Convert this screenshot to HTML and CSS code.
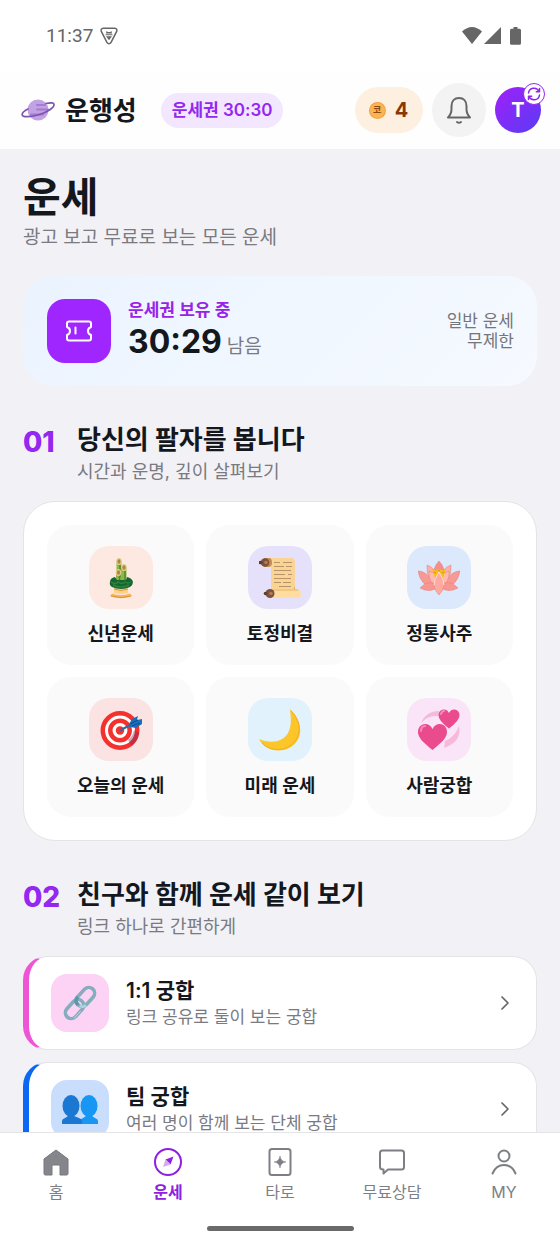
FILE: index.html
```
<!DOCTYPE html>
<html lang="ko">
<head>
    <meta charset="UTF-8">
    <meta name="viewport" content="width=device-width, initial-scale=1.0">
    <title>운행성 - 운세</title>
    <link rel="stylesheet" href="styles.css">
</head>
<body>
    <div class="status-bar">
        <div class="status-left">
            <span>11:37</span>
            <svg width="18" height="18" viewBox="0 0 18 18">
                <path d="M3.2 1.2h11.6q2.6.5 2 3l-5.6 11q-2.2 3-4.4 0L1.200 4.200q-.6-2.500 2-3z" fill="none" stroke="#666" stroke-width="1.500"/>
                <path d="M6 6.500l.5-2.500 1.300 1h2.400l1.300-1 .5 2.500z M5.500 7.300h7v1h-7z M6 9.200h6L9 13.200z" fill="#666"/>
            </svg>
        </div>
        <div class="status-right">
            <svg width="20" height="17" viewBox="0 0 20 17"><path d="M0 4.500Q10-4.500 20 4.500L10 17z" fill="#666"/></svg>
            <svg width="17" height="17" viewBox="0 0 17 17"><path d="M17 0v17H0z" fill="#666"/></svg>
            <svg class="battery" width="11" height="18" viewBox="0 0 11 18"><path d="M3.500 0h4v1.800H9.500q1.500 0 1.500 1.500v13q0 1.500-1.500 1.500h-8Q0 17.800 0 16.300v-13q0-1.500 1.500-1.500h2z" fill="#666"/></svg>
        </div>
    </div>

    <header class="app-header">
        <a class="brand" href="#">
            <svg width="34" height="28" viewBox="0 0 34 28">
                <circle cx="17" cy="14" r="10.500" fill="#c3a2e3"/>
                <path d="M16 9h8M16 13.500h11M10 18.500h12" stroke="#a37dd0" stroke-width="2" stroke-linecap="round"/>
                <path d="M25 7.500c5-1.200 8-.8 8 1 .2 3-6.500 7.500-14.500 10S1.800 21.500 1.200 19c-.4-1.800 1.800-4 5.800-6" fill="none" stroke="#7d55b0" stroke-width="1.700" stroke-linecap="round"/>
            </svg>
            <span>운행성</span>
        </a>
        <a class="ticket-pill" href="#">운세권 30:30</a>
        <div class="header-actions">
            <button class="coin-button" type="button" aria-label="코인 4개">
                <span class="coin">코</span>
                <span>4</span>
            </button>
            <button class="bell-button" type="button" aria-label="알림">
                <svg width="26" height="30" viewBox="0 0 26 30" fill="none" stroke="#666" stroke-width="2" stroke-linecap="round" stroke-linejoin="round">
                    <path d="M2 22.500h22c-2-2-3.500-5-3.500-8.500V11c0-5-3-8-7.500-8s-7.500 3-7.500 8v3c0 3.500-1.500 6.500-3.500 8.500z"/>
                    <path d="M11 27q2 1.600 4 0"/>
                </svg>
            </button>
            <button class="avatar" type="button" aria-label="내 프로필">
                T
                <span class="avatar-badge">
                    <svg width="14" height="14" viewBox="0 0 14 14" fill="none" stroke="#8f24ee" stroke-width="1.500" stroke-linecap="round" stroke-linejoin="round">
                        <path d="M1.500 6A5.500 5.500 0 0 1 12 4.500M12.500 1.500v3.200H9.300M12.500 8A5.500 5.500 0 0 1 2 9.500M1.500 12.500V9.300h3.200"/>
                    </svg>
                </span>
            </button>
        </div>
    </header>

    <main class="content">
        <h1>운세</h1>
        <p class="subtitle">광고 보고 무료로 보는 모든 운세</p>

        <section class="pass-card">
            <div class="pass-icon">
                <svg width="28" height="24" viewBox="0 0 28 24" fill="none" stroke="#fff" stroke-width="2" stroke-linejoin="round" stroke-linecap="round">
                    <path d="M4 2.500h20q2 0 2 2V8q-3 1-3 4t3 4v3.500q0 2-2 2H4q-2 0-2-2V16q3-1 3-4T2 8V4.500q0-2 2-2z"/>
                    <path d="M10.500 8.500v6"/>
                </svg>
            </div>
            <div class="pass-info">
                <p class="pass-label">운세권 보유 중</p>
                <p class="pass-time"><strong>30:29</strong> <span>남음</span></p>
            </div>
            <p class="pass-note">일반 운세<br>무제한</p>
        </section>

        <section>
            <div class="section-head">
                <span class="section-number">01</span>
                <div>
                    <h2>당신의 팔자를 봅니다</h2>
                    <p>시간과 운명, 깊이 살펴보기</p>
                </div>
            </div>
            <div class="fortune-grid">
                <a class="tile" href="#">
                    <span class="tile-icon peach">
                        <svg width="42" height="42" viewBox="0 0 42 42">
                            <path d="M12 36.500q9 3 18 0l2 2.500q-11 4.500-22 0z" fill="#f5b85b"/>
                            <path d="M14 30h14v6q-7 2-14 0z" fill="#ffd28a"/>
                            <path d="M14 32q7 3 14 0M11 39q10 3 20 0" fill="none" stroke="#df9138"/>
                            <path d="M16.500 5h5v20h-5zM21.500 11h5v14h-5zM16 16h5v10h-5z" fill="#8eb747"/>
                            <path d="M20 8v12M25 14v11M19.500 18v8" stroke="#4c8b35" stroke-width="1.500"/>
                            <path d="M10 25q0-4 5-5l2 3h9l1-3q5 1 6 5 0 3-3 5-9 4-18 0-3-2-2-5z" fill="#17652e"/>
                            <path d="M11 25q4 3 7 0 4 3 7 0 3 2 6 0M13 28q8 4 16 0" fill="none" stroke="#2b8540" stroke-width="1.500"/>
                            <ellipse cx="19" cy="4.500" rx="2.800" ry="3.500" fill="#e2cd83"/>
                            <ellipse cx="24" cy="10.500" rx="2.800" ry="3.500" fill="#e2cd83"/>
                            <ellipse cx="18.500" cy="15.500" rx="2.800" ry="3.500" fill="#e2cd83"/>
                            <ellipse cx="19" cy="4.500" rx="1.600" ry="2.300" fill="#ad8450"/>
                            <ellipse cx="24" cy="10.500" rx="1.600" ry="2.300" fill="#ad8450"/>
                            <ellipse cx="18.500" cy="15.500" rx="1.600" ry="2.300" fill="#ad8450"/>
                        </svg>
                    </span>
                    <span class="tile-label">신년운세</span>
                </a>
                <a class="tile" href="#">
                    <span class="tile-icon lavender">
                        <svg width="42" height="42" viewBox="0 0 42 42">
                            <path d="M5 1h27q4 0 4 5v29H12V10H5z" fill="#f9d493"/>
                            <path d="M30 35q5-1 6-6v6z" fill="#d5a25c"/>
                            <path d="M5 1h5q3 0 3 4.500T9 10H5z" fill="#c48c50"/>
                            <path d="M12 32h27q3 0 3 4.500t-3 4.500H10z" fill="#ffdca0"/>
                            <path d="M12 33h27" stroke="#e4b26c"/>
                            <circle cx="6" cy="5.500" r="4.300" fill="#7c5039"/>
                            <circle cx="11" cy="36.500" r="4.500" fill="#7c5039"/>
                            <circle cx="1.500" cy="5.500" r="1.800" fill="#5c3c2f"/>
                            <circle cx="6.500" cy="36.500" r="1.800" fill="#5c3c2f"/>
                            <circle cx="7" cy="5.500" r="1.800" fill="#b37a53"/>
                            <circle cx="12" cy="36.500" r="1.800" fill="#b37a53"/>
                            <path d="M15 5.500h6M24 5.500h9M15 9.500h10M27 9.500h6M15 13.500h17M15 17.500h11M29 17.500h4M15 21.500h17M15 25.500h7M24 25.500h8M20 29.500h12" stroke="#b8926a"/>
                        </svg>
                    </span>
                    <span class="tile-label">토정비결</span>
                </a>
                <a class="tile" href="#">
                    <span class="tile-icon blue">
                        <svg width="42" height="42" viewBox="0 0 42 42">
                            <g stroke="#e07d7c" stroke-width=".5">
                                <path d="M0 14q8 0 13 9l4 8Q3 30 0 14z" fill="#f79a95"/>
                                <path d="M42 14q-8 0-13 9l-4 8q14-1 17-17z" fill="#f79a95"/>
                                <path d="M9 8q10 3 12 18Q8 26 9 8z" fill="#fbb0a6"/>
                                <path d="M33 8Q23 11 21 26q13 0 12-18z" fill="#fbb0a6"/>
                                <path d="M21 4q7 7 5 18H16Q14 11 21 4z" fill="#f58f8c"/>
                                <path d="M11 14q9 2 10 16-11-3-10-16z" fill="#ffb9ad"/>
                                <path d="M31 14q-9 2-10 16 11-3 10-16z" fill="#ffb9ad"/>
                                <path d="M14 12.500l3 1 4-1.500 4 1.500 3-1-3 8H17z" fill="#f7bd18" stroke="none"/>
                                <path d="M2 31q9-10 19-2-8 8-19 2z" fill="#f9968f"/>
                                <path d="M40 31q-9-10-19-2 8 8 19 2z" fill="#f9968f"/>
                                <path d="M21 15q6 9 5 14-1 5-5 9-4-4-5-9-1-5 5-14z" fill="#ffaaa1"/>
                            </g>
                            <path d="M16.500 15.500h1M20.500 13.500h1M24.500 15.500h1" stroke="#c48018" stroke-width="1.500"/>
                            <path d="M21 15q-5 7-5 13M21 15q5 7 5 13" fill="none" stroke="#ffe2d5"/>
                        </svg>
                    </span>
                    <span class="tile-label">정통사주</span>
                </a>
                <a class="tile" href="#">
                    <span class="tile-icon red">
                        <svg width="42" height="42" viewBox="0 0 42 42">
                            <circle cx="20" cy="21.500" r="17.200" fill="#fff" stroke="#f4312d" stroke-width="4.500"/>
                            <circle cx="20" cy="21.500" r="9.700" fill="#fff" stroke="#f4312d" stroke-width="4.500"/>
                            <circle cx="20" cy="21.500" r="4.200" fill="#f4312d"/>
                            <path d="M28 31q5-4 6-10l5 3q-1 8-7 13z" fill="#7d2c61" opacity=".4"/>
                            <path d="M20 21.500l11-6" stroke="#39699a" stroke-width="2"/>
                            <path d="M29 15l3-5 6-3-1 4 5-1v5l-6 4-6-1z" fill="#1b6eb8"/>
                            <path d="M30 15l8-4M32 17l8-3" stroke="#0b4c94"/>
                        </svg>
                    </span>
                    <span class="tile-label">오늘의 운세</span>
                </a>
                <a class="tile" href="#">
                    <span class="tile-icon sky">
                        <svg width="42" height="42" viewBox="0 0 42 42">
                            <path d="M31 0C45 13 44 30 32 38 20 45 5 41 0 30c12 5 24 3 29-6 4-8 3-15 2-24z" fill="#fcc62a"/>
                            <path d="M32 2c11 11 11 26-1 35-10 6-21 4-28-3" fill="none" stroke="#efaf21"/>
                        </svg>
                    </span>
                    <span class="tile-label">미래 운세</span>
                </a>
                <a class="tile" href="#">
                    <span class="tile-icon pink">
                        <svg width="42" height="42" viewBox="0 0 42 42">
                            <path d="M3 14Q8 2 21 2l-1 5Q10 6 3 14z" fill="#f6b9d9"/>
                            <path d="M41 17q3 16-15 22l1-7q10-4 14-15z" fill="#f6b9d9"/>
                            <path d="M31 19.500C24 14 20.500 10 20.500 6c0-6 8-8 10.500-2 2.500-6 10.500-4 10.500 2 0 4-3.500 8-10.500 13.500z" fill="#e94b8c"/>
                            <path d="M14.500 41C6 34 0 29 0 23c0-9 11-11 14.500-3C18 12 29 14 29 23c0 6-6 11-14.500 18z" fill="#e94b8c"/>
                            <path d="M3 22q0-5 4-5M23 5q1-3 3-3" fill="none" stroke="#f98abd" stroke-width="2" stroke-linecap="round"/>
                        </svg>
                    </span>
                    <span class="tile-label">사람궁합</span>
                </a>
            </div>
        </section>

        <section>
            <div class="section-head">
                <span class="section-number">02</span>
                <div>
                    <h2>친구와 함께 운세 같이 보기</h2>
                    <p>링크 하나로 간편하게</p>
                </div>
            </div>
            <div class="match-list">
                <a class="match-card match-pair" href="#">
                    <span class="match-icon">
                        <svg width="36" height="36" viewBox="-2 -2 40 40" fill="none">
                            <g transform="rotate(-48 18 18)">
                                <rect x="15" y="11.500" width="24" height="13" rx="6.500" stroke="#86adbd" stroke-width="4"/>
                                <rect x="-3" y="11.500" width="24" height="13" rx="6.500" stroke="#86adbd" stroke-width="4"/>
                                <path d="M15 18q0-6.500 6.500-6.500" stroke="#5c98a8" stroke-width="4"/>
                                <path d="M15.500 20q1 4 5 4.500" stroke="#a8d6df" stroke-width="3"/>
                                <path d="M1 24.500h11" stroke="#b3dce5"/>
                            </g>
                        </svg>
                    </span>
                    <span class="match-text">
                        <strong>1:1 궁합</strong>
                        <span>링크 공유로 둘이 보는 궁합</span>
                    </span>
                    <svg class="chevron" width="10" height="16" viewBox="0 0 10 16"><path d="M2 2l6 6-6 6" fill="none" stroke="#666" stroke-width="1.700" stroke-linecap="round" stroke-linejoin="round"/></svg>
                </a>
                <a class="match-card match-team" href="#">
                    <span class="match-icon">
                        <svg width="36" height="36" viewBox="0 0 36 36">
                            <path d="M18 33v-3q0-2 3-3l3-2v-2h6v2l3 2q3 1 3 3v3z" fill="#1797f3"/>
                            <ellipse cx="27" cy="15" rx="8.500" ry="11" fill="#1797f3"/>
                            <path d="M0 33v-3q0-2 3-3l3-2v-2h6v2l5 2q3 1 3 3v3z" fill="#1b78d2"/>
                            <ellipse cx="9" cy="15" rx="8.500" ry="11" fill="#1b78d2"/>
                        </svg>
                    </span>
                    <span class="match-text">
                        <strong>팀 궁합</strong>
                        <span>여러 명이 함께 보는 단체 궁합</span>
                    </span>
                    <svg class="chevron" width="10" height="16" viewBox="0 0 10 16"><path d="M2 2l6 6-6 6" fill="none" stroke="#666" stroke-width="1.700" stroke-linecap="round" stroke-linejoin="round"/></svg>
                </a>
            </div>
        </section>
    </main>

    <footer class="bottom-bar">
        <nav class="tabs">
            <a class="tab" href="#">
                <svg width="30" height="30" viewBox="0 0 30 30"><path d="M15 3L3 12v14.500q0 1.500 1.500 1.500H11v-9q0-1 1-1h6q1 0 1 1v9h6.500q1.500 0 1.500-1.500V12z" fill="#85868c" stroke="#77787f" stroke-linejoin="round"/></svg>
                홈
            </a>
            <a class="tab active" href="#">
                <svg width="30" height="30" viewBox="0 0 30 30">
                    <circle cx="15" cy="15" r="13" fill="none" stroke="#8f20e0" stroke-width="2"/>
                    <path d="M20.500 9.500L17.500 17.500 12.500 12.500z" fill="#8f20e0"/>
                    <path d="M10 20l2.500-7.500 5 5z" fill="#d7a9f4"/>
                </svg>
                운세
            </a>
            <a class="tab" href="#">
                <svg width="30" height="30" viewBox="0 0 30 30">
                    <rect x="4.500" y="2" width="21" height="26" rx="2.500" fill="none" stroke="#7e7f86" stroke-width="2"/>
                    <path d="M15 9q.6 5.400 6 6-5.400.6-6 6-.6-5.400-6-6 5.400-.6 6-6z" fill="#7e7f86" stroke="#7e7f86" stroke-width=".5"/>
                </svg>
                타로
            </a>
            <a class="tab" href="#">
                <svg width="30" height="30" viewBox="0 0 30 30"><path d="M5.500 3.500h19q2.500 0 2.500 2.500v14q0 2.500-2.500 2.500H11L6.500 26.500V22.500Q3 22.500 3 20V6q0-2.500 2.500-2.500z" fill="none" stroke="#7e7f86" stroke-width="2" stroke-linejoin="round"/></svg>
                무료상담
            </a>
            <a class="tab" href="#">
                <svg width="30" height="30" viewBox="0 0 30 30" fill="none" stroke="#7e7f86" stroke-width="2" stroke-linecap="round">
                    <circle cx="15" cy="9" r="5.500"/>
                    <path d="M3.500 26.500C6 20.500 10 18 15 18s9 2.500 11.500 8.500"/>
                </svg>
                MY
            </a>
        </nav>
        <div class="home-indicator"></div>
    </footer>
</body>
</html>
```
FILE: styles.css
```
* {
    box-sizing: border-box;
}
body {
    display: flex;
    flex-direction: column;
    height: 100vh;
    margin: 0;
    font-family: Inter, "Noto Sans CJK KR", sans-serif;
    background-color: #f2f1f6;
    color: #14171c;
}
h1, h2, p {
    margin: 0;
}
a {
    color: inherit;
    text-decoration: none;
}
button {
    padding: 0;
    border: none;
    font-family: inherit;
    cursor: pointer;
}
svg {
    display: block;
    flex: none;
}

/* Status bar */
.status-bar {
    display: flex;
    justify-content: space-between;
    align-items: center;
    flex: none;
    height: 71px;
    padding: 0 39px 0 46px;
    background-color: #fff;
    color: #666;
    font-family: Roboto, sans-serif;
    font-size: 19px;
}
.status-left {
    display: flex;
    align-items: center;
    gap: 7px;
}
.status-right {
    display: flex;
    align-items: center;
    gap: 2px;
}
.battery {
    margin-left: 7px;
}

/* Header */
.app-header {
    display: flex;
    align-items: center;
    flex: none;
    height: 79px;
    padding: 0 19px 0 21px;
    background-color: #fefefe;
    border-bottom: 1px solid #f0f0f4;
}
.brand {
    display: flex;
    align-items: center;
    gap: 10px;
    font-size: 26px;
    font-weight: 700;
}
.brand span {
    padding-bottom: 4px;
}
.ticket-pill {
    margin-left: 24px;
    padding: 0 11px;
    border-radius: 18px;
    background-color: #f2e7ff;
    color: #9427f0;
    font-size: 17px;
    font-weight: 600;
    line-height: 35px;
}
.header-actions {
    display: flex;
    align-items: center;
    gap: 9px;
    margin-left: auto;
}
.coin-button {
    display: flex;
    align-items: center;
    justify-content: center;
    gap: 10px;
    width: 68px;
    height: 46px;
    border-radius: 23px;
    background-color: #fdf0e0;
    color: #8a3606;
    font-size: 20px;
    font-weight: 700;
}
.coin {
    width: 15px;
    height: 15px;
    border-radius: 50%;
    background-color: #fbb44f;
    box-shadow: 0 0 0 1px #f0a048;
    color: #8a4a12;
    font-size: 9px;
    line-height: 14px;
}
.bell-button {
    display: grid;
    place-items: center;
    width: 54px;
    height: 54px;
    border-radius: 50%;
    background-color: #f3f3f4;
}
.avatar {
    position: relative;
    width: 46px;
    height: 46px;
    border-radius: 50%;
    background: linear-gradient(135deg, #a020f8, #5a3cf5);
    color: #fff;
    font-size: 20px;
    font-weight: 700;
}
.avatar-badge {
    position: absolute;
    top: -4px;
    right: -4px;
    display: grid;
    place-items: center;
    width: 22px;
    height: 22px;
    border: 1px solid #9427f0;
    border-radius: 50%;
    background-color: #fff;
}

/* Content */
.content {
    flex: 1;
    min-height: 0;
    overflow-y: auto;
    scrollbar-width: none;
    padding: 21px 23px;
}
h1 {
    font-size: 41px;
    font-weight: 700;
    line-height: 52px;
}
.subtitle {
    color: #7a7a80;
    font-size: 19px;
    line-height: 30px;
}
.pass-card {
    display: flex;
    align-items: center;
    gap: 17px;
    margin-top: 23px;
    padding: 23px 23px 23px 24px;
    border-radius: 30px;
    background: linear-gradient(135deg, #ebf3ff, #f0f7ff 50%, #f6f9ff);
}
.pass-icon {
    display: grid;
    place-items: center;
    width: 64px;
    height: 64px;
    border-radius: 18px;
    background-color: #a026ff;
}
.pass-label {
    color: #9a22e8;
    font-size: 17px;
    font-weight: 600;
    line-height: 22px;
}
.pass-time {
    display: flex;
    align-items: baseline;
    gap: 5px;
    color: #7a7a80;
    font-size: 19px;
    line-height: 20px;
}
.pass-time strong {
    color: #14171c;
    font-size: 32px;
    line-height: 42px;
}
.pass-note {
    margin-left: auto;
    color: #74757b;
    font-size: 17px;
    line-height: 20px;
    text-align: right;
}
.section-head {
    display: flex;
    margin: 36px 0 16px;
}
.section-number {
    width: 54px;
    color: #9427f0;
    font-size: 28px;
    font-weight: 800;
    line-height: 40px;
}
h2 {
    font-size: 26px;
    font-weight: 700;
    line-height: 36px;
}
.section-head p {
    color: #7a7a80;
    font-size: 18px;
    line-height: 27px;
}

/* Fortune tiles */
.fortune-grid {
    display: grid;
    grid-template-columns: repeat(3, 1fr);
    gap: 12px;
    padding: 23px;
    border: 1px solid #e4e4e8;
    border-radius: 32px;
    background-color: #fff;
}
.tile {
    display: flex;
    flex-direction: column;
    align-items: center;
    gap: 11px;
    padding: 21px 0 18px;
    border-radius: 24px;
    background-color: #fafafa;
}
.tile-icon {
    display: grid;
    place-items: center;
    width: 64px;
    height: 63px;
    border-radius: 20px;
}
.tile-label {
    font-size: 18px;
    font-weight: 600;
    line-height: 27px;
}
.peach {
    background-color: #fde9e1;
}
.lavender {
    background-color: #e5e1fb;
}
.blue {
    background-color: #dce8fb;
}
.red {
    background-color: #fbe2e3;
}
.sky {
    background-color: #e1f2fc;
}
.pink {
    background-color: #f9e5f7;
}

/* Match cards */
.match-list {
    display: flex;
    flex-direction: column;
    gap: 12px;
}
.match-card {
    display: flex;
    align-items: center;
    gap: 17px;
    height: 94px;
    padding: 0 26px 0 22px;
    border: 1px solid #e4e4e8;
    border-left-width: 6px;
    border-radius: 24px;
    background-color: #fff;
}
.match-pair {
    border-left-color: #f054d6;
}
.match-team {
    border-left-color: #0a68f5;
}
.match-icon {
    display: grid;
    place-items: center;
    width: 58px;
    height: 58px;
    border-radius: 16px;
}
.match-pair .match-icon {
    background-color: #fcd3f5;
}
.match-team .match-icon {
    background-color: #c9defd;
}
.match-text {
    display: flex;
    flex-direction: column;
    color: #7a7a80;
    font-size: 17px;
    line-height: 26px;
}
.match-text strong {
    color: #14171c;
    font-size: 21px;
    font-weight: 600;
    line-height: 27px;
}
.chevron {
    margin-left: auto;
}

/* Bottom tabs */
.bottom-bar {
    flex: none;
    padding-bottom: 13px;
    border-top: 1px solid #e4e4e8;
    background-color: #fff;
}
.tabs {
    display: grid;
    grid-template-columns: repeat(5, 1fr);
    padding: 14px 0 22px;
}
.tab {
    display: flex;
    flex-direction: column;
    align-items: center;
    gap: 3px;
    color: #7e7f86;
    font-size: 16px;
    line-height: 24px;
}
.tab.active {
    color: #8f20e0;
    font-weight: 600;
}
.home-indicator {
    width: 147px;
    height: 5px;
    margin: 0 auto;
    border-radius: 3px;
    background-color: #6a6a6a;
}
```
